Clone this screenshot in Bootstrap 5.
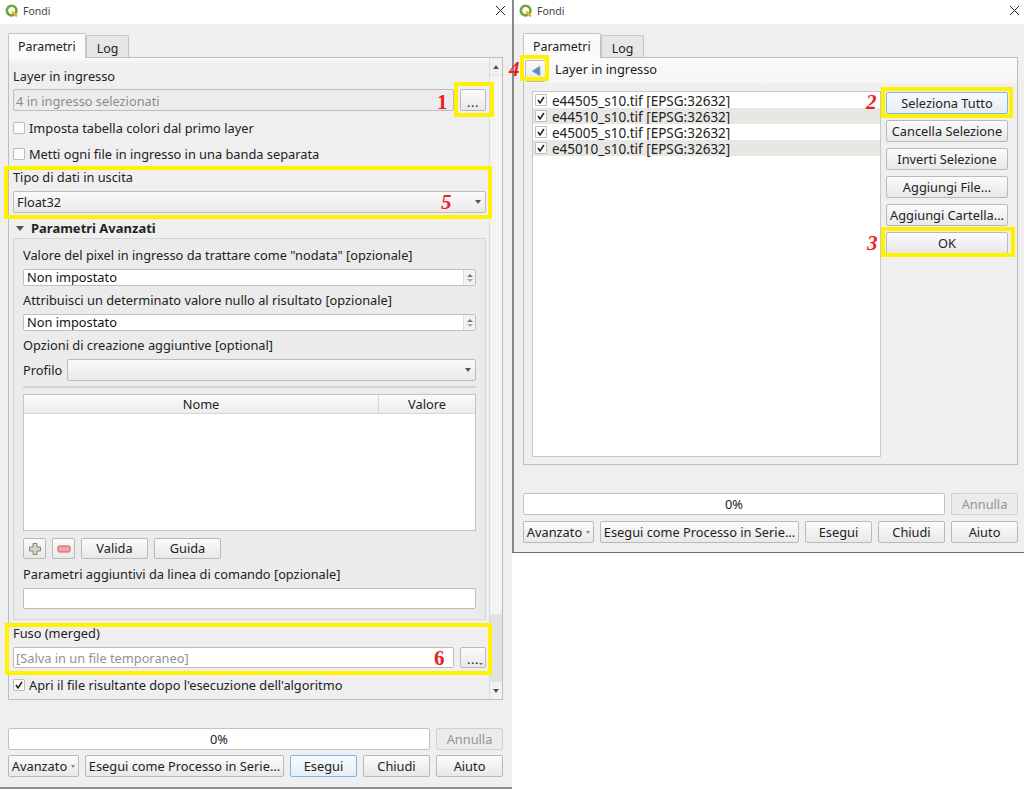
<!DOCTYPE html>
<html lang="it">
<head>
<meta charset="utf-8">
<title>Fondi</title>
<link href="https://cdn.jsdelivr.net/npm/bootstrap@5.3.0/dist/css/bootstrap.min.css" rel="stylesheet">
<style>
html,body{height:100%;margin:0;background:#fff;overflow:hidden}
body{font-family:"Noto Sans","Liberation Sans",sans-serif;font-size:12.8px;line-height:16px;color:#222}
.desk{width:1024px;height:789px;align-items:flex-start}
.win{position:relative;background:#efefef;flex:none}
.win-l{width:512px;height:789px;border-bottom:2px solid #8e8e8e}
.win-r{width:512px;height:553px;border-left:2px solid #8a8a8a;border-bottom:1px solid #6c6c6c}
.tbar{height:24px;background:#fff;padding:0 6px 3px 5px;font-size:10.5px;color:#444;gap:4px}
.win-r .tbar{padding:0 4px 3px 5px}
.tbar .ttl{flex:1}
.tabs-q{margin:9px 0 0 8px;height:24px;border:0;flex-wrap:nowrap}
.win-r .tabs-q{margin-left:9px}
.tabs-q .nav-link{padding:4px 10px 0;border:1px solid #c4c4c4;border-bottom:0;border-radius:2px 2px 0 0;background:#e6e6e6;color:#222;font-size:12.4px;line-height:18px;margin:2px 0 0 0;height:22px}
.tabs-q .nav-link.active{padding:4px 9px 0;background:#fafafa;color:#222;margin:0;height:25px;position:relative;z-index:2;border-color:#c4c4c4}
.panel{background:#efefef;border:1px solid #bdbdbd;box-sizing:border-box}
.win-l .panel{margin-left:8px;width:495px;height:643px}
.win-r .panel{margin-left:9px;width:495px;height:408px;position:relative}
.scrolled{flex:1;padding:0 3px 0 4px;min-width:0;background:linear-gradient(#fbfbfb,#efefef 6px)}
.vbar{width:13px;border-left:1px solid #dcdcdc;background:#f1f1f1}
.vbar .arr{height:17px;display:flex;align-items:center;justify-content:center}
.vbar .thumb{height:540px;background:#f4f4f4;border:1px solid #e4e4e4;border-width:1px 0}
.vbar .rail{flex:1;background:#e2e2e2}
.tri-u{width:0;height:0;border:3.5px solid transparent;border-top:0;border-bottom:4px solid #555}
.tri-d{width:0;height:0;border:3.5px solid transparent;border-bottom:0;border-top:4px solid #555}
.lab{height:16px;white-space:nowrap}
.m5{margin-top:5px}.m6{margin-top:6px}.m7{margin-top:7px}.m8{margin-top:8px}.m9{margin-top:9px}.m10{margin-top:10px}
.fld.form-control{height:22px;min-height:0;padding:3px 2px 0;border:1px solid #bcbcbc;border-radius:2px;background:#fff;font-size:12.8px;line-height:16px;color:#222;white-space:nowrap;overflow:hidden}
.fld.ro{background:#ececec;color:#8c8c8c;flex:1}
.fld.ph{color:#929292;flex:1}
.fld.low.form-control{height:21px;padding-top:2px}
.btn.qb{height:22px;padding:0;border:1px solid #b9b9b9;border-radius:2px;background:linear-gradient(#fbfbfb,#e8e8e8);color:#222;font-size:12.8px;line-height:19px;white-space:nowrap;--bs-btn-hover-bg:#eee;display:flex;align-items:center;justify-content:center}
.btn.qb.hot{border-color:#7fb4e6;background:linear-gradient(#f7fbff,#e6edf3)}
.btn.qb.off{color:#949494;background:#ebebeb;border-color:#d0d0d0;opacity:1}
.btn.qb.low{height:21px}
.w25{width:26px;flex:none}
.btn.qb.dots{letter-spacing:.5px;padding-top:4px;position:relative}
.dots .tri-d{position:absolute;right:2px;bottom:2px;border-width:2px 2px 0;border-top-color:#666}
.cbv{width:12px;height:12px;border:1px solid #bdbdbd;border-radius:1px;background:#fbfbfb;flex:none;display:flex;align-items:center;justify-content:center}
.combo{height:22px;border:1px solid #bcbcbc;border-radius:2px;background:linear-gradient(#fbfbfb,#e9e9e9);padding:0 4px 0 3px;color:#222;justify-content:space-between;flex:1}
.spin{height:17px;border:1px solid #c0c0c0;border-radius:2px;background:#fff;overflow:hidden;line-height:15px}
.spin .v{flex:1;padding-left:3px;white-space:nowrap;color:#111}
.spin .s{width:12px;border-left:1px solid #dedede;background:#f2f2f2;flex-direction:column;justify-content:center;gap:2px;align-items:center}
.spin .tri-u{border-width:3px;border-top:0;border-bottom-width:3px;border-bottom-color:#777}
.spin .tri-d{border-width:3px;border-bottom:0;border-top-width:3px;border-top-color:#aaa}
.grp{height:382px;border:1px solid #d6d6d6;padding:0 9px;background:#ebebeb;margin-top:2px}
.hb{font-weight:700;font-size:13px;gap:7px;padding-left:3px}
.hrq{height:2px;background:#d2d2d2;margin:5px 0 0;border:0;opacity:1}
.profrow{gap:5px}
.tblq{height:137px;border:1px solid #c4c4c4;background:#fff}
.tblq .th{height:19px;background:linear-gradient(#fbfbfb,#ececec);border-bottom:1px solid #d6d6d6;text-align:center;line-height:19px}
.tblq .c1{flex:1;border-right:1px solid #d6d6d6}
.tblq .c2{width:96px}
.foot{margin-left:8px;width:495px}
.win-r .foot{margin-left:9px}
.foot .f1{margin-top:28px}
.bar{flex:1;height:22px;border:1px solid #c2c2c2;border-radius:2px;background:#fff;text-align:center;line-height:21px}
.w67{width:67px;flex:none}
.w71{width:71px;flex:none}
.w199{width:199px;flex:none}
.gap6{gap:6px}
.hdr{height:25px;background:linear-gradient(#fbfbfb,#f5f5f5);padding:2px 0 0 1px;gap:9px}
.hdr .lab{padding-top:1px}
.back{width:21px;height:19px}
.body-r{padding:8px 9px 0 8px;gap:5px;height:381px}
.lst{width:350px;height:366px;border:1px solid #c9c9c9;background:#fff;border-radius:0;display:block}
.lst .list-group-item{height:16px;padding:0 0 0 2px;border:0;border-radius:0;background:#fff;color:#222;display:flex;align-items:center;gap:5px;font-size:13.5px;white-space:nowrap}
.lst .list-group-item.alt{background:#e8e7e3}
.lst .tx{padding-top:2px}
.sidebtns{width:122px;flex:none;gap:6px;padding-top:1px}
.sidebtns .btn.qb{height:22px;width:100%}
.mark-y{position:absolute;border:4px solid #fff200;pointer-events:none;z-index:5}
.num{position:absolute;font-family:"Liberation Serif",serif;font-weight:700;color:#ee1c25;font-size:21px;line-height:22px;z-index:6}
.num.it{font-style:italic}
</style>
</head>
<body>
<div class="desk d-flex">

<section class="win win-l d-flex flex-column">
  <div class="tbar d-flex align-items-center">
    <svg width="14" height="14" viewBox="0 0 14 14"><circle cx="6.6" cy="6.6" r="4.8" fill="none" stroke="#72a53a" stroke-width="2.6"/><path d="M7 7.5l5 5" stroke="#e5b62f" stroke-width="2.4"/></svg>
    <span class="ttl">Fondi</span>
    <svg width="11" height="11" viewBox="0 0 11 11"><path d="M1 1l9 9M10 1l-9 9" stroke="#222" stroke-width="1"/></svg>
  </div>
  <ul class="nav nav-tabs tabs-q">
    <li class="nav-item"><span class="nav-link active">Parametri</span></li>
    <li class="nav-item"><span class="nav-link">Log</span></li>
  </ul>
  <div class="panel d-flex">
    <div class="scrolled">
      <div class="lab m10">Layer in ingresso</div>
      <div class="d-flex m5 gap6">
        <div class="form-control fld ro">4 in ingresso selezionati</div>
        <button type="button" class="btn qb w25 dots">...</button>
      </div>
      <div class="d-flex align-items-center lab m9 gap-1"><span class="cbv"></span><span>Imposta tabella colori dal primo layer</span></div>
      <div class="d-flex align-items-center lab m10 gap-1"><span class="cbv"></span><span>Metti ogni file in ingresso in una banda separata</span></div>
      <div class="lab m7">Tipo di dati in uscita</div>
      <div class="d-flex combo align-items-center m6"><span>Float32</span><span class="tri-d"></span></div>
      <div class="lab m7 hb d-flex align-items-center"><span class="tri-d" style="border-width:5px 4px 0"></span><span>Parametri Avanzati</span></div>
      <div class="grp">
        <div class="lab m8">Valore del pixel in ingresso da trattare come "nodata" [opzionale]</div>
        <div class="spin d-flex m6"><span class="v">Non impostato</span><span class="s d-flex"><span class="tri-u"></span><span class="tri-d"></span></span></div>
        <div class="lab m6">Attribuisci un determinato valore nullo al risultato [opzionale]</div>
        <div class="spin d-flex m6"><span class="v">Non impostato</span><span class="s d-flex"><span class="tri-u"></span><span class="tri-d"></span></span></div>
        <div class="lab m6">Opzioni di creazione aggiuntive [optional]</div>
        <div class="d-flex align-items-center profrow m6"><span>Profilo</span><div class="d-flex combo align-items-center"><span></span><span class="tri-d"></span></div></div>
        <hr class="hrq">
        <div class="tblq m6">
          <div class="d-flex"><div class="th c1">Nome</div><div class="th c2">Valore</div></div>
        </div>
        <div class="d-flex gap6 m7">
          <button type="button" class="btn qb low" style="width:23px" aria-label="Aggiungi"><svg width="14" height="14" viewBox="0 0 14 14"><path d="M5 1.5h4v3.5h3.5v4H9v3.5H5V9H1.5V5H5z" fill="#cfd8c8" stroke="#7d8a74" stroke-width="1"/></svg></button>
          <button type="button" class="btn qb low" style="width:23px" aria-label="Rimuovi"><svg width="14" height="8" viewBox="0 0 14 8"><rect x="1" y="1" width="12" height="6" rx="1" fill="#f5a3ab" stroke="#e2566a"/></svg></button>
          <button type="button" class="btn qb low w67">Valida</button>
          <button type="button" class="btn qb low w67">Guida</button>
        </div>
        <div class="lab m7">Parametri aggiuntivi da linea di comando [opzionale]</div>
        <div class="form-control fld low m6"></div>
      </div>
      <div class="lab m5">Fuso (merged)</div>
      <div class="d-flex m6 gap6">
        <div class="form-control fld ph low">[Salva in un file temporaneo]</div>
        <button type="button" class="btn qb w25 dots low">...<span class="tri-d"></span></button>
      </div>
      <div class="d-flex align-items-center lab m9 gap-1"><span class="cbv"><svg width="10" height="10" viewBox="0 0 10 10"><path d="M2 5l2 3 4-6" fill="none" stroke="#222" stroke-width="1.5"/></svg></span><span>Apri il file risultante dopo l'esecuzione dell'algoritmo</span></div>
    </div>
    <div class="vbar d-flex flex-column">
      <div class="arr"><span class="tri-u"></span></div>
      <div class="thumb"></div>
      <div class="rail"></div>
      <div class="arr"><span class="tri-d"></span></div>
    </div>
  </div>
  <div class="foot">
    <div class="d-flex gap6 f1">
      <div class="bar">0%</div>
      <button type="button" class="btn qb off w67" disabled>Annulla</button>
    </div>
    <div class="d-flex gap6 m5">
      <button type="button" class="btn qb gap-1 w71">Avanzato <span class="tri-d" style="border-width:3px 2.5px 0;border-top-color:#888"></span></button>
      <button type="button" class="btn qb w199">Esegui come Processo in Serie...</button>
      <button type="button" class="btn qb hot w67">Esegui</button>
      <button type="button" class="btn qb w67">Chiudi</button>
      <button type="button" class="btn qb w67">Aiuto</button>
    </div>
  </div>
  <i class="mark-y" style="left:454px;top:82px;width:40px;height:35px"></i>
  <i class="mark-y" style="left:4px;top:166px;width:488px;height:53px"></i>
  <i class="mark-y" style="left:5px;top:623px;width:487px;height:52px"></i>
  <b class="num" style="left:437px;top:91px">1</b>
  <b class="num it" style="left:441px;top:191px">5</b>
  <b class="num" style="left:434px;top:647px">6</b>
</section>

<section class="win win-r d-flex flex-column">
  <div class="tbar d-flex align-items-center">
    <svg width="14" height="14" viewBox="0 0 14 14"><circle cx="6.6" cy="6.6" r="4.8" fill="none" stroke="#72a53a" stroke-width="2.6"/><path d="M7 7.5l5 5" stroke="#e5b62f" stroke-width="2.4"/></svg>
    <span class="ttl">Fondi</span>
    <svg width="11" height="11" viewBox="0 0 11 11"><path d="M1 1l9 9M10 1l-9 9" stroke="#222" stroke-width="1"/></svg>
  </div>
  <ul class="nav nav-tabs tabs-q">
    <li class="nav-item"><span class="nav-link active">Parametri</span></li>
    <li class="nav-item"><span class="nav-link">Log</span></li>
  </ul>
  <div class="panel">
    <div class="hdr d-flex align-items-start">
      <button type="button" class="btn qb back" aria-label="Indietro"><svg width="10" height="12" viewBox="0 0 10 12"><path d="M9 1v10L1 6z" fill="#5b8fc4" stroke="#8fb2d6" stroke-width=".7"/></svg></button>
      <span class="lab">Layer in ingresso</span>
    </div>
    <div class="d-flex body-r">
      <ul class="list-group lst">
        <li class="list-group-item"><span class="cbv"><svg width="10" height="10" viewBox="0 0 10 10"><path d="M2 5l2 3 4-6" fill="none" stroke="#222" stroke-width="1.5"/></svg></span><span class="tx">e44505_s10.tif [EPSG:32632]</span></li>
        <li class="list-group-item alt"><span class="cbv"><svg width="10" height="10" viewBox="0 0 10 10"><path d="M2 5l2 3 4-6" fill="none" stroke="#222" stroke-width="1.5"/></svg></span><span class="tx">e44510_s10.tif [EPSG:32632]</span></li>
        <li class="list-group-item"><span class="cbv"><svg width="10" height="10" viewBox="0 0 10 10"><path d="M2 5l2 3 4-6" fill="none" stroke="#222" stroke-width="1.5"/></svg></span><span class="tx">e45005_s10.tif [EPSG:32632]</span></li>
        <li class="list-group-item alt"><span class="cbv"><svg width="10" height="10" viewBox="0 0 10 10"><path d="M2 5l2 3 4-6" fill="none" stroke="#222" stroke-width="1.5"/></svg></span><span class="tx">e45010_s10.tif [EPSG:32632]</span></li>
      </ul>
      <div class="sidebtns d-flex flex-column">
        <button type="button" class="btn qb hot">Seleziona Tutto</button>
        <button type="button" class="btn qb">Cancella Selezione</button>
        <button type="button" class="btn qb">Inverti Selezione</button>
        <button type="button" class="btn qb">Aggiungi File...</button>
        <button type="button" class="btn qb">Aggiungi Cartella...</button>
        <button type="button" class="btn qb">OK</button>
      </div>
    </div>
  </div>
  <div class="foot">
    <div class="d-flex gap6 f1">
      <div class="bar">0%</div>
      <button type="button" class="btn qb off w67" disabled>Annulla</button>
    </div>
    <div class="d-flex gap6 m6">
      <button type="button" class="btn qb gap-1 w71">Avanzato <span class="tri-d" style="border-width:3px 2.5px 0;border-top-color:#888"></span></button>
      <button type="button" class="btn qb w199">Esegui come Processo in Serie...</button>
      <button type="button" class="btn qb w67">Esegui</button>
      <button type="button" class="btn qb w67">Chiudi</button>
      <button type="button" class="btn qb w67">Aiuto</button>
    </div>
  </div>
  <i class="mark-y" style="left:6px;top:55px;width:29px;height:26px"></i>
  <i class="mark-y" style="left:367px;top:87px;width:132px;height:31px"></i>
  <i class="mark-y" style="left:367px;top:227px;width:134px;height:30px"></i>
  <b class="num it" style="left:-5px;top:58px">4</b>
  <b class="num it" style="left:352px;top:91px">2</b>
  <b class="num it" style="left:353px;top:232px">3</b>
</section>

</div>
<script src="https://cdn.jsdelivr.net/npm/bootstrap@5.3.0/dist/js/bootstrap.bundle.min.js"></script>
</body>
</html>
